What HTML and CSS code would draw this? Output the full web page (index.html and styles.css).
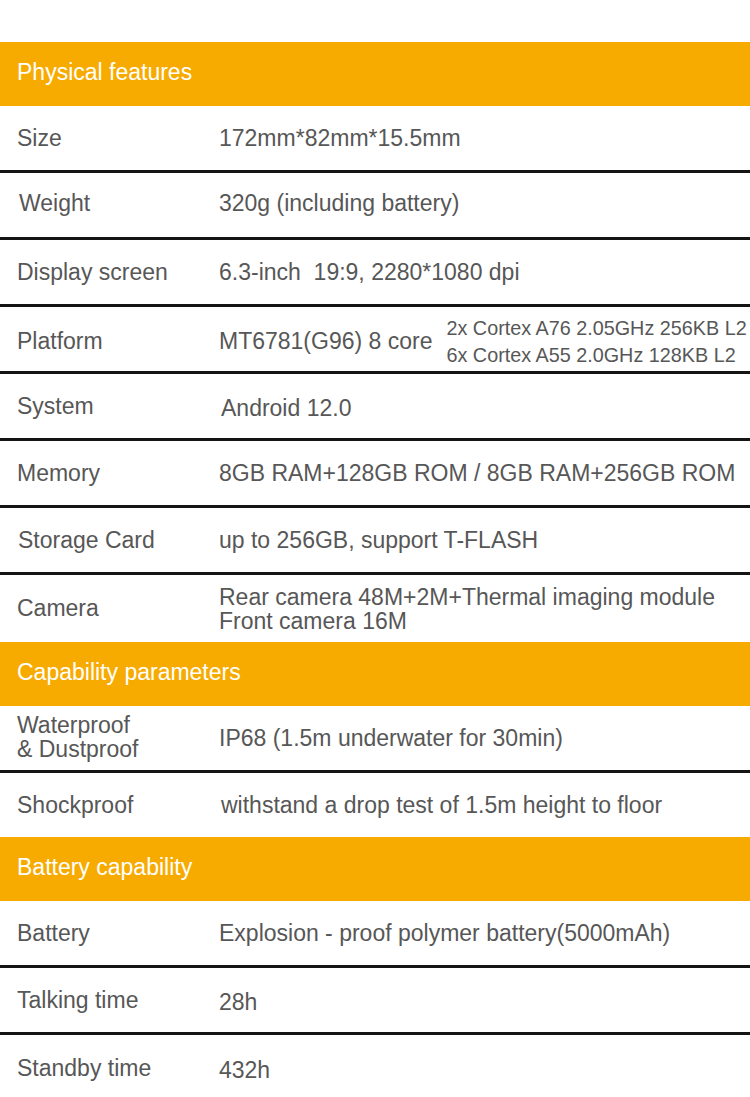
FILE: index.html
```html
<!DOCTYPE html>
<html lang="en">
<head>
<meta charset="utf-8">
<title>Specifications</title>
<link rel="stylesheet" href="styles.css">
</head>
<body>
<div class="page">
  <div class="head">Physical features</div>
  <div class="row"><div class="label">Size</div><div class="value">172mm*82mm*15.5mm</div></div>
  <div class="row"><div class="label lx2 up2">Weight</div><div class="value up2">320g (including battery)</div></div>
  <div class="row"><div class="label">Display screen</div><div class="value">6.3-inch&nbsp; 19:9, 2280*1080 dpi</div></div>
  <div class="row"><div class="label down2">Platform</div>
    <div class="value platform"><span>MT6781(G96) 8 core</span>
      <div class="sub"><div>2x Cortex A76 2.05GHz 256KB L2</div><div>6x Cortex A55 2.0GHz 128KB L2</div></div>
    </div>
  </div>
  <div class="row"><div class="label">System</div><div class="value vx2 down2">Android 12.0</div></div>
  <div class="row"><div class="label">Memory</div><div class="value">8GB RAM+128GB ROM / 8GB RAM+256GB ROM</div></div>
  <div class="row"><div class="label lx1">Storage Card</div><div class="value">up to 256GB, support T-FLASH</div></div>
  <div class="row last"><div class="label">Camera</div><div class="value two">Rear camera 48M+2M+Thermal imaging module<br>Front camera 16M</div></div>
  <div class="head">Capability parameters</div>
  <div class="row"><div class="label two up1">Waterproof<br>&amp; Dustproof</div><div class="value">IP68 (1.5m underwater for 30min)</div></div>
  <div class="row last short"><div class="label">Shockproof</div><div class="value vx2">withstand a drop test of 1.5m height to floor</div></div>
  <div class="head">Battery capability</div>
  <div class="row"><div class="label">Battery</div><div class="value">Explosion - proof polymer battery(5000mAh)</div></div>
  <div class="row"><div class="label">Talking time</div><div class="value down2">28h</div></div>
  <div class="row last"><div class="label">Standby time</div><div class="value down2">432h</div></div>
</div>
</body>
</html>
```

FILE: styles.css
```css
html, body {
  margin: 0;
  padding: 0;
  background: #ffffff;
}
.page {
  width: 750px;
  padding-top: 42px;
  font-family: "Liberation Sans", Arial, sans-serif;
  font-size: 23px;
  color: #575757;
}
.head {
  height: 64px;
  box-sizing: border-box;
  background: #f7ab00;
  color: #ffffff;
  display: flex;
  align-items: center;
  padding: 0 0 4px 17px;
}
.row {
  height: 67px;
  box-sizing: border-box;
  border-bottom: 3px solid #141414;
  display: grid;
  grid-template-columns: 202px 1fr;
  align-items: center;
  padding-left: 17px;
}
.row.last {
  border-bottom: none;
}
.row.short {
  height: 64px;
}
.label, .value {
  white-space: nowrap;
}
.two {
  line-height: 24px;
}
.platform {
  display: flex;
  align-items: center;
  gap: 14px;
  position: relative;
  top: 3px;
}
.platform > span {
  position: relative;
  top: -1px;
}
.sub {
  font-size: 19.8px;
  line-height: 27px;
}
.lx1 { padding-left: 1px; }
.lx2 { padding-left: 2px; }
.vx2 { padding-left: 2px; }
.up1 { position: relative; top: -1px; }
.up2 { position: relative; top: -2px; }
.down2 { position: relative; top: 2px; }
```
